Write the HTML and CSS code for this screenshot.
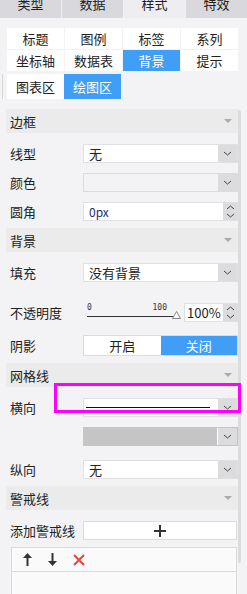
FILE: index.html
```html
<!DOCTYPE html>
<html lang="zh">
<head>
  <meta charset="UTF-8">
  <meta name="viewport" content="width=device-width, initial-scale=1.0">
  <title>样式 - 背景</title>
  <link rel="stylesheet" href="styles.css">
</head>
<body>
  <div class="tabs">
    <div class="tab">类型</div>
    <div class="tab">数据</div>
    <div class="tab active">样式</div>
    <div class="tab">特效</div>
  </div>

  <div class="subtabs">
    <div class="cell">标题</div>
    <div class="cell">图例</div>
    <div class="cell">标签</div>
    <div class="cell">系列</div>
    <div class="cell">坐标轴</div>
    <div class="cell">数据表</div>
    <div class="cell on">背景</div>
    <div class="cell">提示</div>
  </div>

  <div class="areas">
    <div class="cell">图表区</div>
    <div class="cell on">绘图区</div>
  </div>

  <div class="main">
    <div class="panel">
      <div class="head first">边框<span class="tri"></span></div>
      <div class="row">
        <span class="label">线型</span>
        <div class="select"><span class="val">无</span><span class="arr"><svg width="9" height="5" viewBox="0 0 9 5"><polyline points="1,1 4.5,4 8,1" fill="none" stroke="#444" stroke-width="1"/></svg></span></div>
      </div>
      <div class="row">
        <span class="label">颜色</span>
        <div class="select off"><span class="val"></span><span class="arr"><svg width="9" height="5" viewBox="0 0 9 5"><polyline points="1,1 4.5,4 8,1" fill="none" stroke="#444" stroke-width="1"/></svg></span></div>
      </div>
      <div class="row">
        <span class="label">圆角</span>
        <div class="select"><span class="val px">0px</span><span class="spin"><svg width="9" height="5" viewBox="0 0 9 5"><polyline points="1,4 4.5,1 8,4" fill="none" stroke="#444" stroke-width="1"/></svg><svg width="9" height="5" viewBox="0 0 9 5"><polyline points="1,1 4.5,4 8,1" fill="none" stroke="#444" stroke-width="1"/></svg></span></div>
      </div>

      <div class="head">背景<span class="tri"></span></div>
      <div class="row">
        <span class="label">填充</span>
        <div class="select"><span class="val">没有背景</span><span class="arr"><svg width="9" height="5" viewBox="0 0 9 5"><polyline points="1,1 4.5,4 8,1" fill="none" stroke="#444" stroke-width="1"/></svg></span></div>
      </div>
      <div class="row opacity">
        <span class="label">不透明度</span>
        <div class="slider">
          <div class="scale"><span>0</span><span>100</span></div>
          <div class="track">
            <svg class="thumb" width="9" height="8" viewBox="0 0 9 8"><polygon points="4.5,0.5 8.5,7.5 0.5,7.5" fill="#fff" stroke="#888" stroke-width="1"/></svg>
          </div>
        </div>
        <div class="select num"><span class="val">100%</span><span class="spin"><svg width="9" height="5" viewBox="0 0 9 5"><polyline points="1,4 4.5,1 8,4" fill="none" stroke="#444" stroke-width="1"/></svg><svg width="9" height="5" viewBox="0 0 9 5"><polyline points="1,1 4.5,4 8,1" fill="none" stroke="#444" stroke-width="1"/></svg></span></div>
      </div>
      <div class="row shadow">
        <span class="label">阴影</span>
        <div class="switch">
          <span>开启</span>
          <span class="on">关闭</span>
        </div>
      </div>

      <div class="head">网格线<span class="tri"></span></div>
      <div class="row">
        <span class="label">横向</span>
        <div class="select"><span class="val"><span class="line"></span></span><span class="arr"><svg width="9" height="5" viewBox="0 0 9 5"><polyline points="1,1 4.5,4 8,1" fill="none" stroke="#444" stroke-width="1"/></svg></span></div>
        <div class="mark"></div>
      </div>
      <div class="row">
        <span class="label"></span>
        <div class="select gray"><span class="val"></span><span class="arr"><svg width="9" height="5" viewBox="0 0 9 5"><polyline points="1,1 4.5,4 8,1" fill="none" stroke="#444" stroke-width="1"/></svg></span></div>
      </div>
      <div class="row spaced">
        <span class="label">纵向</span>
        <div class="select"><span class="val">无</span><span class="arr"><svg width="9" height="5" viewBox="0 0 9 5"><polyline points="1,1 4.5,4 8,1" fill="none" stroke="#444" stroke-width="1"/></svg></span></div>
      </div>

      <div class="head">警戒线<span class="tri"></span></div>
      <div class="row">
        <span class="label">添加警戒线</span>
        <div class="add"><svg width="12" height="12" viewBox="0 0 12 12"><path d="M6 0V12M0 6H12" stroke="#333" stroke-width="2"/></svg></div>
      </div>
      <div class="list">
        <div class="tools">
          <svg width="9" height="13" viewBox="0 0 9 13"><path d="M4.5 4V13" stroke="#333" stroke-width="2"/><polygon points="4.5,0 9,5 0,5" fill="#333"/></svg>
          <svg width="9" height="13" viewBox="0 0 9 13"><path d="M4.5 0V9" stroke="#333" stroke-width="2"/><polygon points="4.5,13 9,8 0,8" fill="#333"/></svg>
          <svg width="12" height="12" viewBox="0 0 12 12"><path d="M1 1L11 11M11 1L1 11" stroke="#e8463c" stroke-width="2"/></svg>
        </div>
      </div>
    </div>
    <div class="scrollbar"></div>
  </div>
</body>
</html>
```

FILE: styles.css
```css
html, body {
  margin: 0;
  padding: 0;
}

body {
  background: #f3f3f5;
  color: #222;
  font-family: "Noto Sans CJK SC", sans-serif;
  font-size: 13px;
  overflow: hidden;
}

.tabs {
  display: flex;
  gap: 1px;
  height: 28px;
  margin-top: -10px;
  background: #f0f0f2;
}

.tab {
  flex: 1;
  background: #d9d9dd;
  text-align: center;
  line-height: 28px;
}

.tab.active {
  background: #eeeef0;
}

.subtabs {
  display: grid;
  grid-template-columns: repeat(4, 1fr);
  grid-auto-rows: 21px;
  gap: 1px;
  width: 231px;
  margin: 10px 0 0 7px;
}

.cell {
  background: #fff;
  text-align: center;
  line-height: 21px;
}

.cell.on {
  background: #419ef7;
  color: #fff;
}

.areas {
  display: flex;
  margin: 3px 0 0 2px;
  padding-left: 4px;
  border-left: 1px solid #d6d6d6;
}

.areas .cell {
  width: 57px;
  line-height: 25px;
}

.main {
  display: flex;
  margin-top: 10px;
  padding-left: 6px;
}

.panel {
  width: 232px;
}

.scrollbar {
  width: 3px;
  height: 453px;
  margin-top: 1px;
  background: #dcdcdc;
  border-radius: 2px;
}

.head {
  display: flex;
  align-items: center;
  justify-content: space-between;
  height: 24px;
  margin-top: 7px;
  padding: 0 6px 0 4px;
  background: #ebebeb;
}

.head.first {
  margin-top: 0;
}

.tri {
  width: 0;
  height: 0;
  border-left: 4px solid transparent;
  border-right: 4px solid transparent;
  border-top: 4px solid #aaa;
}

.row {
  position: relative;
  display: flex;
  align-items: center;
  height: 19px;
  margin-top: 10px;
  padding-left: 4px;
}

.head + .row {
  margin-top: 11px;
}

.row.spaced {
  margin-top: 14px;
}

.row.opacity {
  margin-top: 21px;
}

.row.shadow {
  height: 21px;
  margin-top: 13px;
}

.label {
  flex: none;
  width: 73px;
  white-space: nowrap;
}

.select {
  flex: 1;
  display: flex;
  height: 19px;
  box-sizing: border-box;
  background: #fff;
  border: 1px solid #e0e0e2;
}

.select .val {
  flex: 1;
  padding-left: 5px;
  line-height: 17px;
}

.select .arr {
  width: 19px;
  display: flex;
  align-items: center;
  justify-content: center;
  background: #dcdcdf;
}

.select .spin {
  width: 14px;
  display: flex;
  flex-direction: column;
  align-items: center;
  justify-content: center;
  gap: 3px;
  background: #dcdcdf;
}

.select.off {
  background: #f3f3f5;
  border-color: #dcdcdf;
}

.select.gray {
  background: #c5c5c5;
  border-color: #c5c5c5;
}

.select.gray .arr {
  border-left: 1px solid #fff;
}

.val.px {
  color: #1c2a7a;
  font-size: 12px;
}

.line {
  display: block;
  width: 124px;
  margin: 8px 0 0 -3px;
  border-top: 1.5px solid #111;
}

.mark {
  position: absolute;
  left: 48px;
  top: -15px;
  width: 187px;
  height: 30px;
  box-sizing: border-box;
  border: 3px solid #f0f;
  z-index: 1;
}

.slider {
  flex: none;
  width: 97px;
  height: 19px;
  padding-left: 4px;
}

.scale {
  display: flex;
  justify-content: space-between;
  width: 80px;
  font-family: "DejaVu Sans Mono", monospace;
  font-size: 8px;
  line-height: 10px;
  color: #333;
}

.track {
  position: relative;
  width: 88px;
  height: 1px;
  margin-top: 3px;
  background: #333;
}

.thumb {
  position: absolute;
  left: 85px;
  top: -5px;
}

.select.num {
  flex: none;
  width: 54px;
}

.select.num .val {
  padding-left: 2px;
}

.switch {
  flex: 1;
  display: flex;
  height: 21px;
  box-sizing: border-box;
  border: 1px solid #dcdcdf;
}

.switch span {
  flex: 1;
  background: #fff;
  text-align: center;
  line-height: 19px;
}

.switch span.on {
  background: #419ef7;
  color: #fff;
}

.add {
  flex: 1;
  display: flex;
  align-items: center;
  justify-content: center;
  height: 19px;
  margin-right: 1px;
  box-sizing: border-box;
  background: #fff;
  border: 1px solid #dcdcdf;
}

.list {
  height: 60px;
  margin: 7px 1px 0 5px;
  background: #fafafb;
  border: 1px solid #dadada;
}

.tools {
  display: flex;
  align-items: center;
  gap: 16px;
  height: 23px;
  padding-left: 11px;
  border-bottom: 1px solid #dadada;
}
```
